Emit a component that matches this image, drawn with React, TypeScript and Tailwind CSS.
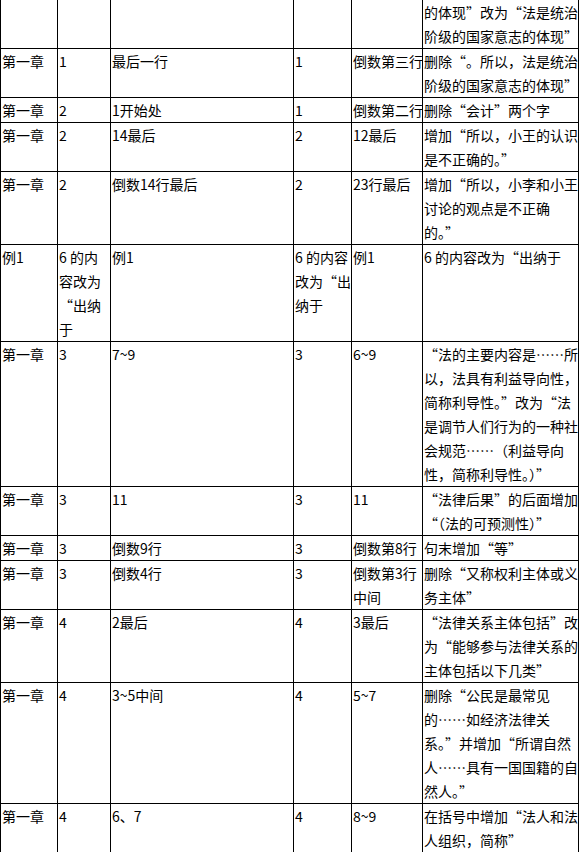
const rows: string[][][] = [
  [[], [], [], [], [], ["的体现”改为“法是统治", "阶级的国家意志的体现”"]],
  [["第一章"], ["1"], ["最后一行"], ["1"], ["倒数第三行"], ["删除“。所以，法是统治", "阶级的国家意志的体现”"]],
  [["第一章"], ["2"], ["1开始处"], ["1"], ["倒数第二行"], ["删除“会计”两个字"]],
  [["第一章"], ["2"], ["14最后"], ["2"], ["12最后"], ["增加“所以，小王的认识", "是不正确的。”"]],
  [["第一章"], ["2"], ["倒数14行最后"], ["2"], ["23行最后"], ["增加“所以，小李和小王", "讨论的观点是不正确", "的。”"]],
  [["例1"], ["6 的内", "容改为", "“出纳", "于"], ["例1"], ["6 的内容", "改为“出", "纳于"], ["例1"], ["6 的内容改为“出纳于"]],
  [
    ["第一章"], ["3"], ["7~9"], ["3"], ["6~9"],
    ["“法的主要内容是……所", "以，法具有利益导向性，", "简称利导性。”改为“法", "是调节人们行为的一种社", "会规范……（利益导向", "性，简称利导性。）”"],
  ],
  [["第一章"], ["3"], ["11"], ["3"], ["11"], ["“法律后果”的后面增加", "“（法的可预测性）”"]],
  [["第一章"], ["3"], ["倒数9行"], ["3"], ["倒数第8行"], ["句末增加“等”"]],
  [["第一章"], ["3"], ["倒数4行"], ["3"], ["倒数第3行", "中间"], ["删除“又称权利主体或义", "务主体”"]],
  [["第一章"], ["4"], ["2最后"], ["4"], ["3最后"], ["“法律关系主体包括”改", "为“能够参与法律关系的", "主体包括以下几类”"]],
  [
    ["第一章"], ["4"], ["3~5中间"], ["4"], ["5~7"],
    ["删除“公民是最常见", "的……如经济法律关", "系。”并增加“所谓自然", "人……具有一国国籍的自", "然人。”"],
  ],
  [["第一章"], ["4"], ["6、7"], ["4"], ["8~9"], ["在括号中增加“法人和法", "人组织，简称”"]],
];

export default function App() {
  return (
    <div className="h-[852px] w-[581px] overflow-hidden bg-white text-black">
      <div
        className="grid w-[579px] grid-cols-[57px_53px_183px_58px_71px_156px] border-l border-black text-[14px] leading-[24px]"
        style={{ fontFamily: '"Noto Sans CJK SC", "Noto Sans", sans-serif' }}
      >
        {rows.map((row, i) =>
          row.map((cell, j) => (
            <div key={`${i}-${j}`} className="whitespace-nowrap border-r border-b border-black pl-px">
              {cell.map((line, k) => (
                <div key={k}>{line}</div>
              ))}
            </div>
          ))
        )}
      </div>
    </div>
  );
}
